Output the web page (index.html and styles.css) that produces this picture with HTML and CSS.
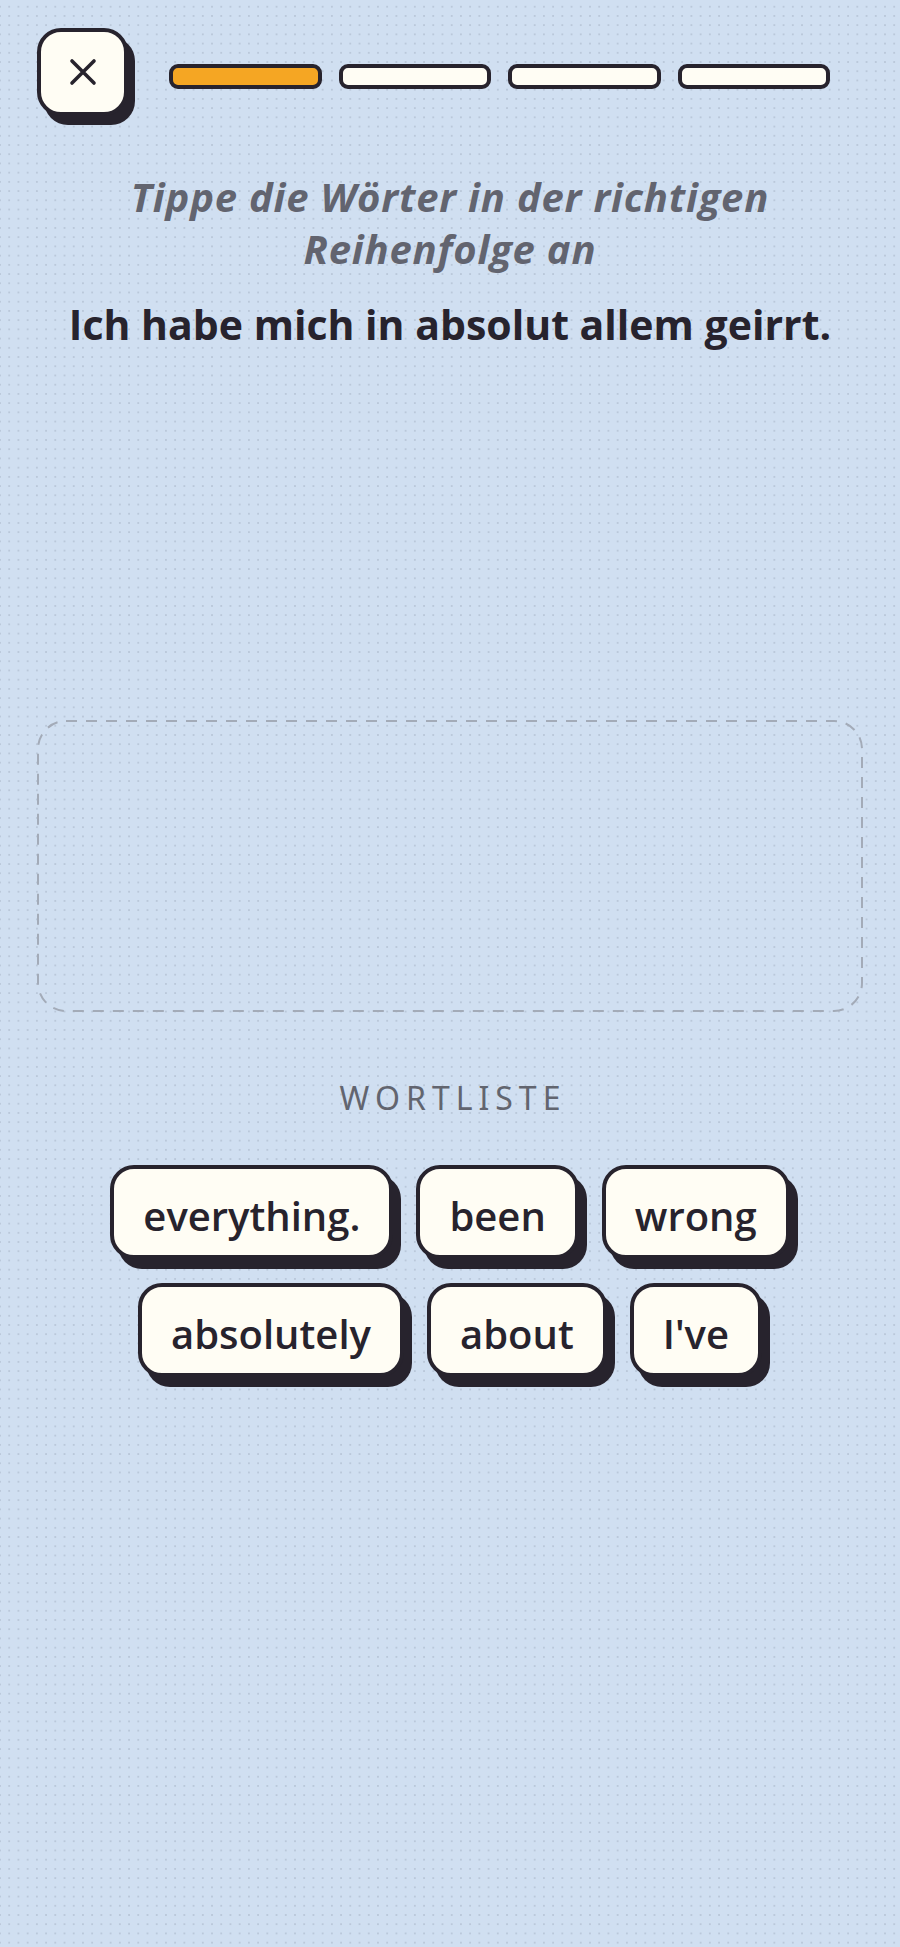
FILE: index.html
```html
<!DOCTYPE html>
<html lang="de">
<head>
<meta charset="utf-8">
<title>Wortliste</title>
<link rel="stylesheet" href="styles.css">
</head>
<body>
<div class="screen">
  <header class="topbar">
    <button class="close-btn" aria-label="Schließen">
      <svg width="34" height="34" viewBox="0 0 34 34"><path d="M6 6 L28 28 M28 6 L6 28" stroke="#27232d" stroke-width="3.6" stroke-linecap="round" fill="none"/></svg>
    </button>
    <div class="progress">
      <span class="seg seg-done"></span>
      <span class="seg"></span>
      <span class="seg"></span>
      <span class="seg"></span>
    </div>
  </header>

  <h1 class="instruction">Tippe die Wörter in der richtigen Reihenfolge an</h1>
  <p class="sentence">Ich habe mich in absolut allem geirrt.</p>

  <div class="dropzone">
    <svg class="dash" width="100%" height="100%" preserveAspectRatio="none">
      <rect x="1" y="1" width="calc(100% - 2px)" height="calc(100% - 2px)" rx="28" ry="28" fill="none" stroke="#a3abb8" stroke-width="2" stroke-dasharray="11 9"/>
    </svg>
  </div>

  <div class="wordlist-label">WORTLISTE</div>

  <div class="chips">
    <button class="chip">everything.</button>
    <button class="chip">been</button>
    <button class="chip">wrong</button>
    <button class="chip">absolutely</button>
    <button class="chip">about</button>
    <button class="chip">I've</button>
  </div>
</div>
</body>
</html>
```

FILE: styles.css
```css
html, body {
  margin: 0;
  padding: 0;
}
body {
  width: 900px;
  min-height: 1947px;
  background-color: #d0dff1;
  background-image: radial-gradient(circle, #bac8da 1px, rgba(186,200,218,0) 1.4px);
  background-size: 9.23px 9.23px;
  background-position: 4.6px 2.1px;
  font-family: "Open Sans", "Noto Sans", sans-serif;
  color: #27232d;
}
.screen {
  display: flex;
  flex-direction: column;
  align-items: center;
}
.topbar {
  align-self: stretch;
  display: flex;
  align-items: flex-start;
  padding: 28px 70px 0 37px;
  gap: 41px;
}
.close-btn {
  width: 91px;
  height: 88px;
  box-sizing: border-box;
  border: 4px solid #27232d;
  border-radius: 24px;
  background: #fffdf4;
  box-shadow: 7px 9px 0 #27232d;
  display: flex;
  align-items: center;
  justify-content: center;
  padding: 0;
}
.progress {
  flex: 1;
  display: flex;
  gap: 17px;
  margin-top: 36px;
}
.seg {
  flex: 1;
  height: 25px;
  box-sizing: border-box;
  border: 4px solid #27232d;
  border-radius: 9px;
  background: #fffdf4;
}
.seg-done {
  background: #f5a623;
}
.instruction {
  margin: 55px 0 0;
  width: 780px;
  text-align: center;
  font-size: 40px;
  line-height: 52px;
  font-weight: 700;
  font-style: italic;
  letter-spacing: 0.8px;
  color: #62646f;
}
.sentence {
  margin: 23px 0 0;
  font-size: 41px;
  line-height: 53px;
  font-weight: 700;
  color: #27232d;
}
.dropzone {
  position: relative;
  margin-top: 369px;
  width: 826px;
  height: 292px;
  box-sizing: border-box;
}
.dash {
  position: absolute;
  inset: 0;
}
.wordlist-label {
  margin-top: 66px;
  font-family: "Noto Sans", sans-serif;
  font-size: 32px;
  line-height: 40px;
  letter-spacing: 6px;
  padding-left: 6px;
  color: #62656f;
}
.chips {
  margin-top: 47px;
  width: 760px;
  display: flex;
  flex-wrap: wrap;
  justify-content: center;
  column-gap: 23px;
  row-gap: 24px;
}
.chip {
  height: 94px;
  box-sizing: border-box;
  padding: 6px 29px 0;
  border: 4px solid #27232d;
  border-radius: 24px;
  background: #fffdf4;
  box-shadow: 8px 10px 0 #27232d;
  font-family: "Open Sans", "Noto Sans", sans-serif;
  font-size: 40px;
  font-weight: 600;
  color: #27232d;
}
```
